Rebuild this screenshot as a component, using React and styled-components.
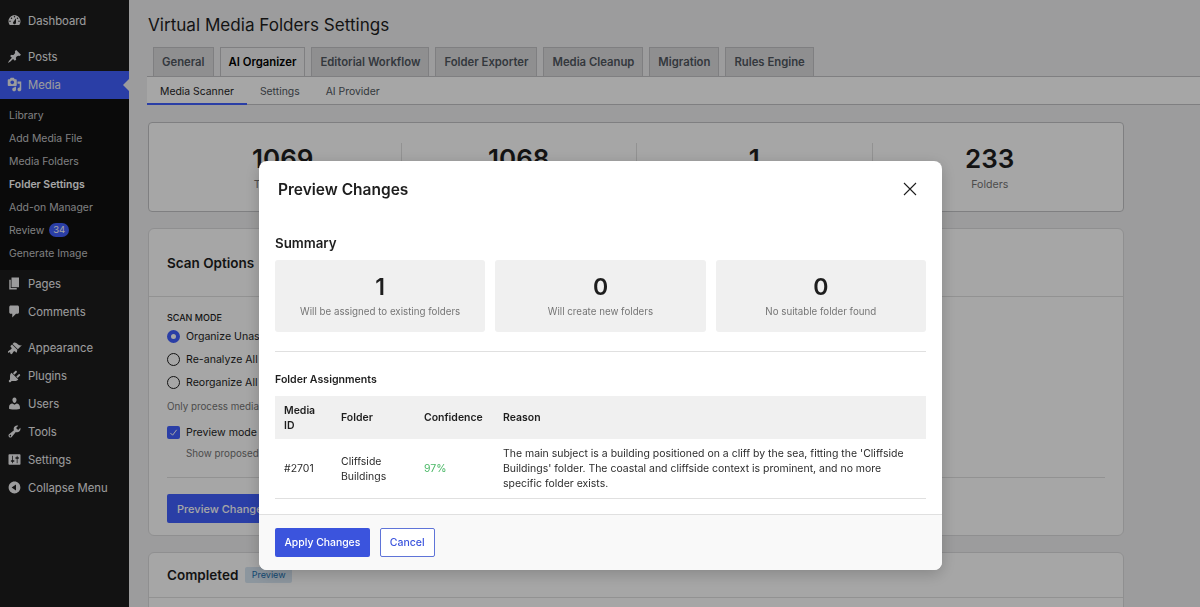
import React from "react";
import styled, { createGlobalStyle } from "styled-components";

const ICONS = {
  dashboard:
    "M3.76 16h12.48c1.1-1.37 1.76-3.11 1.76-5 0-4.42-3.58-8-8-8s-8 3.58-8 8c0 1.89.66 3.63 1.76 5zM10 4c.55 0 1 .45 1 1s-.45 1-1 1-1-.45-1-1 .45-1 1-1zM6 6c.55 0 1 .45 1 1s-.45 1-1 1-1-.45-1-1 .45-1 1-1zm8 0c.55 0 1 .45 1 1s-.45 1-1 1-1-.45-1-1 .45-1 1-1zm-5.37 5.55L12 7v6c0 1.1-.9 2-2 2s-2-.9-2-2c0-.57.24-1.08.63-1.45zM4 10c.55 0 1 .45 1 1s-.45 1-1 1-1-.45-1-1 .45-1 1-1zm12 0c.55 0 1 .45 1 1s-.45 1-1 1-1-.45-1-1 .45-1 1-1z",
  posts:
    "M10.44 3.02l1.82-1.82 6.36 6.35-1.83 1.82c-1.05-.68-2.48-.57-3.41.36l-.75.75c-.92.93-1.04 2.35-.35 3.41l-1.83 1.82-2.41-2.41-2.8 2.79c-.42.42-3.38 2.71-3.8 2.29s1.86-3.39 2.28-3.81l2.79-2.79L4.1 9.36l1.83-1.82c1.05.69 2.48.57 3.4-.36l.75-.75c.93-.92 1.05-2.35.36-3.41z",
  media:
    "M13 11V4c0-.55-.45-1-1-1h-1.67L9 1H5L3.67 3H2c-.55 0-1 .45-1 1v7c0 .55.45 1 1 1h10c.55 0 1-.45 1-1zM7 4.5c1.38 0 2.5 1.12 2.5 2.5S8.38 9.5 7 9.5 4.5 8.38 4.5 7 5.62 4.5 7 4.5zM14 6h5v10.5c0 1.38-1.12 2.5-2.5 2.5S14 17.88 14 16.5s1.12-2.5 2.5-2.5c.17 0 .34.02.5.05V9h-3V6zm-4 8.05V13h2v3.5c0 1.38-1.12 2.5-2.5 2.5S7 17.88 7 16.5 8.12 14 9.5 14c.17 0 .34.02.5.05z",
  pages: "M6 15V2h10v13H6zm-1 1h8v2H3V5h2v11z",
  comments:
    "M5 2h9c1.1 0 2 .9 2 2v7c0 1.1-.9 2-2 2h-2l-5 5v-5H5c-1.1 0-2-.9-2-2V4c0-1.1.9-2 2-2z",
  appearance:
    "M14.48 11.06L7.41 3.99l1.5-1.5c.5-.56 2.3-.47 3.51.32 1.21.8 1.43 1.28 2.91 2.1 1.18.64 2.45 1.26 4.45.85zm-.71.71L6.7 4.7 4.93 6.47c-.39.39-.39 1.02 0 1.41l1.06 1.06c.39.39.39 1.03 0 1.42-.6.6-1.43 1.11-2.21 1.69-.35.26-.7.53-1.01.84C1.43 13.23.88 14.42 1.5 15.5c.16.27.56.2.86 0 .52-.35.99-.55 1.4-.42.43.13.62.55.62.99v.4c.04.62.48 1.13 1.1 1.16.52.02.78-.14 1.23-.59.31-.31.58-.66.84-1.01.58-.78 1.09-1.61 1.69-2.21.39-.39 1.03-.39 1.42 0l1.06 1.06c.39.39 1.02.39 1.41 0z",
  plugins:
    "M13.11 4.36L9.87 7.6 8 5.73l3.24-3.24c.35-.34 1.05-.2 1.56.32.52.51.66 1.21.31 1.55zm-8 1.77l.91-1.12 9.01 9.01-1.19.84c-.71.71-2.63 1.16-3.82 1.16H6.14L4.9 17.26c-.59.59-1.54.59-2.12 0-.59-.58-.59-1.53 0-2.12l1.24-1.24v-3.88c0-1.13.4-3.19 1.09-3.89zm7.26 3.97l3.24-3.24c.34-.35 1.04-.21 1.55.31.52.51.66 1.21.31 1.55l-3.24 3.25z",
  users:
    "M10 9.25c-2.27 0-2.73-3.44-2.73-3.44C7 4.02 7.82 2 9.97 2c2.16 0 2.98 2.02 2.71 3.81 0 0-.41 3.44-2.68 3.44zm0 2.57L12.72 10c2.39 0 4.52 2.33 4.52 4.53v2.49s-3.65 1.13-7.24 1.13c-3.65 0-7.24-1.13-7.24-1.13v-2.49c0-2.25 1.94-4.48 4.47-4.48z",
  tools:
    "M16.68 9.77c-1.34 1.34-3.3 1.67-4.95.99l-5.41 6.52c-.99.99-2.59.99-3.58 0s-.99-2.59 0-3.57l6.52-5.42c-.68-1.65-.35-3.61.99-4.95 1.28-1.28 3.12-1.62 4.72-1.06l-2.89 2.89 2.82 2.82 2.86-2.87c.53 1.58.18 3.39-1.08 4.65zM3.81 16.21c.4.39 1.04.39 1.43 0 .4-.4.4-1.04 0-1.43-.39-.4-1.03-.4-1.43 0-.39.39-.39 1.03 0 1.43z",
  settings:
    "M18 16V4c0-.55-.45-1-1-1H3c-.55 0-1 .45-1 1v12c0 .55.45 1 1 1h14c.55 0 1-.45 1-1zM8 11h1c.55 0 1 .45 1 1s-.45 1-1 1H8v1.5c0 .28-.22.5-.5.5s-.5-.22-.5-.5V13H6c-.55 0-1-.45-1-1s.45-1 1-1h1V5.5c0-.28.22-.5.5-.5s.5.22.5.5V11zm5-2h-1c-.55 0-1-.45-1-1s.45-1 1-1h1V5.5c0-.28.22-.5.5-.5s.5.22.5.5V7h1c.55 0 1 .45 1 1s-.45 1-1 1h-1v5.5c0 .28-.22.5-.5.5s-.5-.22-.5-.5V9z",
  collapse:
    "M10 2.16c4.33 0 7.84 3.51 7.84 7.84s-3.51 7.84-7.84 7.84S2.16 14.33 2.16 10 5.71 2.16 10 2.16zm2 11.72V6.12L6.18 9.97z",
};

function MenuIcon({ name }) {
  return (
    <IconSvg viewBox="0 0 20 20" aria-hidden="true">
      <path d={ICONS[name]} />
    </IconSvg>
  );
}

function MenuItem({ icon, label, $current, $mt }) {
  return (
    <MenuRow $current={$current} $mt={$mt}>
      <MenuIcon name={icon} />
      <span>{label}</span>
    </MenuRow>
  );
}

function App() {
  return (
    <Page>
      <GlobalStyle />
      <Sidebar>
        <MenuItem $mt={7} icon="dashboard" label="Dashboard" />
        <MenuItem $mt={8.3} icon="posts" label="Posts" />
        <MenuItem $current icon="media" label="Media" />
        <SubMenu>
          <SubItem>Library</SubItem>
          <SubItem>Add Media File</SubItem>
          <SubItem>Media Folders</SubItem>
          <SubItem $active>Folder Settings</SubItem>
          <SubItem>Add-on Manager</SubItem>
          <SubItem>
            Review <Count>34</Count>
          </SubItem>
          <SubItem>Generate Image</SubItem>
        </SubMenu>
        <MenuItem icon="pages" label="Pages" />
        <MenuItem icon="comments" label="Comments" />
        <MenuItem $mt={9} icon="appearance" label="Appearance" />
        <MenuItem icon="plugins" label="Plugins" />
        <MenuItem icon="users" label="Users" />
        <MenuItem icon="tools" label="Tools" />
        <MenuItem icon="settings" label="Settings" />
        <MenuItem $mt={0.5} icon="collapse" label="Collapse Menu" />
      </Sidebar>

      <Main>
        <Title>Virtual Media Folders Settings</Title>
        <Tabs>
          <Tab>General</Tab>
          <Tab $active>AI Organizer</Tab>
          <Tab>Editorial Workflow</Tab>
          <Tab>Folder Exporter</Tab>
          <Tab>Media Cleanup</Tab>
          <Tab>Migration</Tab>
          <Tab>Rules Engine</Tab>
        </Tabs>
        <SubNav>
          <SubTab $active>Media Scanner</SubTab>
          <SubTab>Settings</SubTab>
          <SubTab>AI Provider</SubTab>
        </SubNav>

        <Panels>
          <StatsCard>
            <Stat>
              <StatValue>1069</StatValue>
              <StatLabel>Total Media</StatLabel>
            </Stat>
            <Stat>
              <StatValue>1068</StatValue>
              <StatLabel>Organized</StatLabel>
            </Stat>
            <Stat>
              <StatValue>1</StatValue>
              <StatLabel>Unassigned</StatLabel>
            </Stat>
            <Stat>
              <StatValue>233</StatValue>
              <StatLabel>Folders</StatLabel>
            </Stat>
          </StatsCard>

          <Card>
            <CardHeader>
              <CardTitle>Scan Options</CardTitle>
            </CardHeader>
            <CardBody>
              <FieldLabel>SCAN MODE</FieldLabel>
              <RadioGroup>
                <RadioRow>
                  <Radio $checked />
                  Organize Unassigned
                </RadioRow>
                <RadioRow>
                  <Radio />
                  Re-analyze All
                </RadioRow>
                <RadioRow>
                  <Radio />
                  Reorganize All
                </RadioRow>
              </RadioGroup>
              <Help>Only process media</Help>
              <CheckRow>
                <CheckBox>
                  <svg width="9" height="9" viewBox="0 0 10 10" aria-hidden="true">
                    <path d="M1.5 5.5 L4 8 L8.5 2" fill="none" stroke="#fff" strokeWidth="1.1" />
                  </svg>
                </CheckBox>
                Preview mode
              </CheckRow>
              <CheckHelp>Show proposed</CheckHelp>
              <Rule />
              <PreviewButton>Preview Changes</PreviewButton>
            </CardBody>
          </Card>

          <Card $open>
            <CardHeader $completed>
              <CardTitle>Completed</CardTitle>
              <Badge>Preview</Badge>
            </CardHeader>
          </Card>
        </Panels>
      </Main>

      <Overlay>
        <Modal>
          <ModalHeader>
            <ModalTitle>Preview Changes</ModalTitle>
            <CloseButton aria-label="Close">
              <svg width="14" height="14" viewBox="0 0 14 14" aria-hidden="true">
                <path d="M1 1 L13 13 M13 1 L1 13" stroke="#1e1e1e" strokeWidth="1.1" fill="none" />
              </svg>
            </CloseButton>
          </ModalHeader>
          <ModalBody>
            <SummaryTitle>Summary</SummaryTitle>
            <Tiles>
              <Tile>
                <TileValue>1</TileValue>
                <TileLabel>Will be assigned to existing folders</TileLabel>
              </Tile>
              <Tile>
                <TileValue>0</TileValue>
                <TileLabel>Will create new folders</TileLabel>
              </Tile>
              <Tile>
                <TileValue>0</TileValue>
                <TileLabel>No suitable folder found</TileLabel>
              </Tile>
            </Tiles>
            <Divider />
            <AssignTitle>Folder Assignments</AssignTitle>
            <Table>
              <colgroup>
                <col width="57" />
                <col width="83" />
                <col width="79" />
                <col />
              </colgroup>
              <thead>
                <tr>
                  <Th>Media ID</Th>
                  <Th>Folder</Th>
                  <Th>Confidence</Th>
                  <Th>Reason</Th>
                </tr>
              </thead>
              <tbody>
                <tr>
                  <Td>#2701</Td>
                  <Td>Cliffside Buildings</Td>
                  <Td $green>97%</Td>
                  <Td>
                    The main subject is a building positioned on a cliff by the sea, fitting the
                    'Cliffside Buildings' folder. The coastal and cliffside context is prominent,
                    and no more specific folder exists.
                  </Td>
                </tr>
              </tbody>
            </Table>
          </ModalBody>
          <ModalFooter>
            <ApplyButton>Apply Changes</ApplyButton>
            <CancelButton>Cancel</CancelButton>
          </ModalFooter>
        </Modal>
      </Overlay>
    </Page>
  );
}

const GlobalStyle = createGlobalStyle`
  html, body {
    margin: 0;
    height: 100%;
    overflow: hidden;
    background: #f0f0f1;
  }
  body {
    font-family: Inter, "Liberation Sans", sans-serif;
    color: #1e1e1e;
  }
  * {
    box-sizing: border-box;
  }
`;

const Page = styled.div`
  display: flex;
  height: 607px;
  overflow: hidden;
`;

const Sidebar = styled.nav`
  flex: 0 0 129px;
  background: #1d1d1d;
  color: #f0f0f1;
  font-size: 11.3px;
`;

const MenuRow = styled.div`
  display: flex;
  align-items: center;
  gap: 6px;
  height: 27.8px;
  padding-left: 7px;
  margin-top: ${(p) => p.$mt || 0}px;
  position: relative;
  background: ${(p) => (p.$current ? "#4160ff" : "transparent")};

  ${(p) =>
    p.$current &&
    `
    &::after {
      content: "";
      position: absolute;
      right: 0;
      top: 50%;
      margin-top: -6px;
      border: 6px solid transparent;
      border-right-color: #f0f0f1;
      border-left-width: 0;
    }
  `}
`;

const IconSvg = styled.svg`
  width: 15px;
  height: 15px;
  fill: currentColor;
  flex: none;
`;

const SubMenu = styled.div`
  background: #101010;
  padding: 5.7px 0 4.5px;
`;

const SubItem = styled.div`
  height: 23px;
  line-height: 23px;
  padding-left: 9px;
  font-size: 10.45px;
  color: ${(p) => (p.$active ? "#fff" : "#c3c4c7")};
  font-weight: ${(p) => (p.$active ? 600 : 400)};
  white-space: nowrap;
`;

const Count = styled.span`
  display: inline-block;
  min-width: 20px;
  height: 14px;
  line-height: 14px;
  margin-left: 2px;
  border-radius: 7px;
  background: #4160ff;
  color: #fff;
  font-size: 9.5px;
  text-align: center;
  vertical-align: 1px;
`;

const Main = styled.main`
  flex: 1;
  min-width: 0;
  padding: 13px 0 0 18px;
`;

const Title = styled.h1`
  margin: 0 0 0 1px;
  font-size: 17.1px;
  line-height: 24px;
  font-weight: 400;
`;

const Tabs = styled.div`
  display: flex;
  gap: 6px;
  margin: 10px 0 0 6px;
  height: 29px;
`;

const Tab = styled.div`
  display: flex;
  align-items: center;
  padding: 0 8px;
  font-size: 11.3px;
  font-weight: 600;
  white-space: nowrap;
  color: ${(p) => (p.$active ? "#000" : "#50575e")};
  background: ${(p) => (p.$active ? "#f0f0f1" : "#dcdcde")};
  border: 1px solid #c3c4c7;
  border-bottom: 0;
`;

const SubNav = styled.div`
  display: flex;
  height: 29px;
  background: #fff;
  border-top: 1px solid #c3c4c7;
  border-bottom: 1px solid #c3c4c7;
`;

const SubTab = styled.div`
  display: flex;
  align-items: center;
  padding: 0 13px;
  font-size: 10.4px;
  color: ${(p) => (p.$active ? "#1e1e1e" : "#50575e")};
  box-shadow: ${(p) => (p.$active ? "inset 0 -2px 0 #4160ff" : "none")};
  margin-bottom: -1px;
`;

const Panels = styled.div`
  width: 976px;
  margin: 17px 0 0 1px;
  display: flex;
  flex-direction: column;
  gap: 16px;
`;

const StatsCard = styled.section`
  display: grid;
  grid-template-columns: repeat(4, 1fr);
  height: 90px;
  padding: 20px 16px;
  background: #fff;
  border: 1px solid #c3c4c7;
  border-radius: 4px;
`;

const Stat = styled.div`
  text-align: center;
  border-left: 1px solid #e0e0e0;
  padding-top: 1px;

  &:first-child {
    border-left: 0;
  }
`;

const StatValue = styled.div`
  font-size: 26px;
  line-height: 30px;
  font-weight: 600;
`;

const StatLabel = styled.div`
  margin-top: 4px;
  font-size: 10.6px;
  line-height: 14px;
  color: #757575;
`;

const Card = styled.section`
  background: #fff;
  border: 1px solid #dcdcde;
  border-radius: 6px;
  flex: none;
  min-height: ${(p) => (p.$open ? "120px" : "0")};
`;

const CardHeader = styled.header`
  display: flex;
  align-items: center;
  gap: 7px;
  height: ${(p) => (p.$completed ? "45px" : "68px")};
  padding: 0 18px;
  border-bottom: 1px solid #e0e0e0;
`;

const CardTitle = styled.h2`
  margin: 0;
  font-size: 13.5px;
  font-weight: 600;
`;

const CardBody = styled.div`
  height: 238px;
  padding: 14px 18px 0;
`;

const FieldLabel = styled.div`
  margin-top: 1px;
  font-size: 9px;
  font-weight: 500;
  line-height: 12px;
`;

const RadioGroup = styled.div`
  margin-top: 1px;
`;

const RadioRow = styled.div`
  display: flex;
  align-items: center;
  gap: 6px;
  height: 23px;
  font-size: 10.6px;
  white-space: nowrap;
`;

const Radio = styled.span`
  width: 13px;
  height: 13px;
  border-radius: 50%;
  border: ${(p) => (p.$checked ? "4px solid #4160ff" : "1px solid #1e1e1e")};
  background: #fff;
`;

const Help = styled.div`
  margin-top: 6px;
  font-size: 9.8px;
  line-height: 14px;
  color: #757575;
`;

const CheckRow = styled(RadioRow)`
  margin-top: 7px;
`;

const CheckBox = styled.span`
  display: flex;
  align-items: center;
  justify-content: center;
  width: 13px;
  height: 13px;
  border-radius: 2px;
  background: #4160ff;
`;

const CheckHelp = styled(Help)`
  margin: 3px 0 0 19px;
`;

const Rule = styled.div`
  height: 1px;
  margin-top: 16px;
  background: #e0e0e0;
`;

const PreviewButton = styled.button`
  margin-top: 16px;
  height: 29px;
  padding: 0 10px;
  border: 0;
  border-radius: 2px;
  background: #4160ff;
  color: #fff;
  font: 500 11px Inter, sans-serif;
`;

const Badge = styled.span`
  padding: 2px 6.5px;
  border-radius: 2px;
  background: #d8e6f3;
  color: #2271b1;
  font-size: 9px;
  line-height: 12px;
`;

const Overlay = styled.div`
  position: fixed;
  inset: 0;
  display: flex;
  justify-content: center;
  padding-top: 161px;
  background: rgba(0, 0, 0, 0.35);
`;

const Modal = styled.div`
  display: flex;
  flex-direction: column;
  width: 683px;
  height: 409px;
  margin-left: 1px;
  background: #fff;
  border-radius: 8px;
  overflow: hidden;
  box-shadow: 0 4px 16px rgba(0, 0, 0, 0.2);
`;

const ModalHeader = styled.div`
  display: flex;
  align-items: center;
  justify-content: space-between;
  height: 57px;
  padding: 0 25.5px 1px 19px;
  flex: none;
`;

const ModalTitle = styled.h2`
  margin: 0;
  font-size: 15.5px;
  font-weight: 600;
`;

const CloseButton = styled.button`
  display: flex;
  padding: 0;
  border: 0;
  background: none;
`;

const ModalBody = styled.div`
  flex: 1;
  min-height: 0;
  padding: 16px 16px 0;
`;

const SummaryTitle = styled.h3`
  margin: 0;
  font-size: 13.3px;
  line-height: 18px;
  font-weight: 600;
`;

const Tiles = styled.div`
  display: grid;
  grid-template-columns: repeat(3, 1fr);
  gap: 10px;
  margin-top: 8px;
`;

const Tile = styled.div`
  height: 72px;
  padding-top: 12px;
  border-radius: 3px;
  background: #f0f0f0;
  text-align: center;
`;

const TileValue = styled.div`
  font-size: 23px;
  line-height: 30px;
  font-weight: 600;
`;

const TileLabel = styled.div`
  margin-top: 3px;
  font-size: 9.75px;
  line-height: 14px;
  color: #757575;
`;

const Divider = styled.div`
  height: 1px;
  margin-top: 19px;
  background: #e0e0e0;
`;

const AssignTitle = styled.h4`
  margin: 20px 0 0;
  font-size: 10.6px;
  line-height: 15px;
  font-weight: 600;
`;

const Table = styled.table`
  width: 100%;
  margin-top: 9px;
  border-collapse: collapse;
  table-layout: fixed;
  font-size: 10.47px;
`;

const Th = styled.th`
  height: 43px;
  padding: 0 9px;
  background: #f0f0f0;
  text-align: left;
  font-weight: 600;
  line-height: 15px;
`;

const Td = styled.td`
  height: 59px;
  padding: 1px 9px 0;
  line-height: 15.2px;
  border-bottom: 1px solid #e0e0e0;
  color: ${(p) => (p.$green ? "#4ab866" : "#2c2c2c")};
`;

const ModalFooter = styled.div`
  display: flex;
  align-items: center;
  gap: 10px;
  height: 56px;
  padding: 0 16px;
  flex: none;
  background: #f9f9f9;
  border-top: 1px solid #e0e0e0;
`;

const ApplyButton = styled.button`
  height: 29px;
  padding: 0 9.5px;
  border: 0;
  border-radius: 2px;
  background: #3b54dd;
  color: #fff;
  font: 500 10.4px Inter, sans-serif;
`;

const CancelButton = styled.button`
  height: 29px;
  padding: 0 9px;
  border: 1px solid #5f74d8;
  border-radius: 2px;
  background: #fff;
  color: #3b54dd;
  font: 500 10.5px Inter, sans-serif;
`;

export default App;
